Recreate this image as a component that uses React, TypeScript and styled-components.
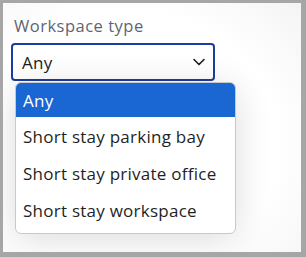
import React from 'react';
import styled, { createGlobalStyle } from 'styled-components';

const GlobalStyle = createGlobalStyle`
  html, body {
    margin: 0;
    padding: 0;
    background: #a6a6a6;
  }
  body {
    font-family: 'Open Sans', Lato, sans-serif;
  }
`;

const Card = styled.div`
  box-sizing: border-box;
  margin: 3px 5px 5px 3px;
  height: 249px;
  padding: 13px 0 0 8px;
  background: radial-gradient(ellipse 260px 220px at 120px 140px, #ffffff 60%, #f2f2f2 100%);
  overflow: hidden;
`;

const Label = styled.div`
  margin-left: 3px;
  font-size: 16.5px;
  letter-spacing: 0.5px;
  line-height: 20px;
  color: #5d6572;
`;

const Select = styled.div`
  box-sizing: border-box;
  margin-top: 7px;
  width: 204px;
  height: 38px;
  display: flex;
  align-items: center;
  justify-content: space-between;
  padding: 0 8px 0 9px;
  border: 2px solid #1d3c9c;
  border-radius: 4px;
  background: #fff;
  font-size: 17px;
  letter-spacing: 0.25px;
  color: #1b1b1b;
`;

const Menu = styled.ul`
  box-sizing: border-box;
  list-style: none;
  margin: 1px 0 0 4px;
  padding: 0 0 5px;
  width: 221px;
  border: 1px solid #c9c9c9;
  border-radius: 6px;
  background: #fff;
  overflow: hidden;
  box-shadow: 0 6px 36px rgba(0, 0, 0, 0.14);
`;

const Option = styled.li<{ $active?: boolean }>`
  box-sizing: border-box;
  height: ${(p) => (p.$active ? 34 : 37)}px;
  display: flex;
  align-items: center;
  padding: ${(p) => (p.$active ? '0 7px' : '2px 7px 0')};
  font-size: 17px;
  letter-spacing: 0.25px;
  color: ${(p) => (p.$active ? '#ffffff' : '#1f1f1f')};
  background: ${(p) => (p.$active ? '#1a66d2' : 'transparent')};
`;

const options = ['Any', 'Short stay parking bay', 'Short stay private office', 'Short stay workspace'];

const Chevron = () => (
  <svg width="12" height="8" viewBox="0 0 12 8" fill="none">
    <path d="M1 1.5 L6 6.5 L11 1.5" stroke="#1b1b1b" strokeWidth="1.6" strokeLinecap="round" strokeLinejoin="round" />
  </svg>
);

const App: React.FC = () => {
  return (
    <>
      <GlobalStyle />
      <Card>
        <Label>Workspace type</Label>
        <Select>
          <span>Any</span>
          <Chevron />
        </Select>
        <Menu>
          {options.map((o, i) => (
            <Option key={o} $active={i === 0}>
              {o}
            </Option>
          ))}
        </Menu>
      </Card>
    </>
  );
};

export default App;
